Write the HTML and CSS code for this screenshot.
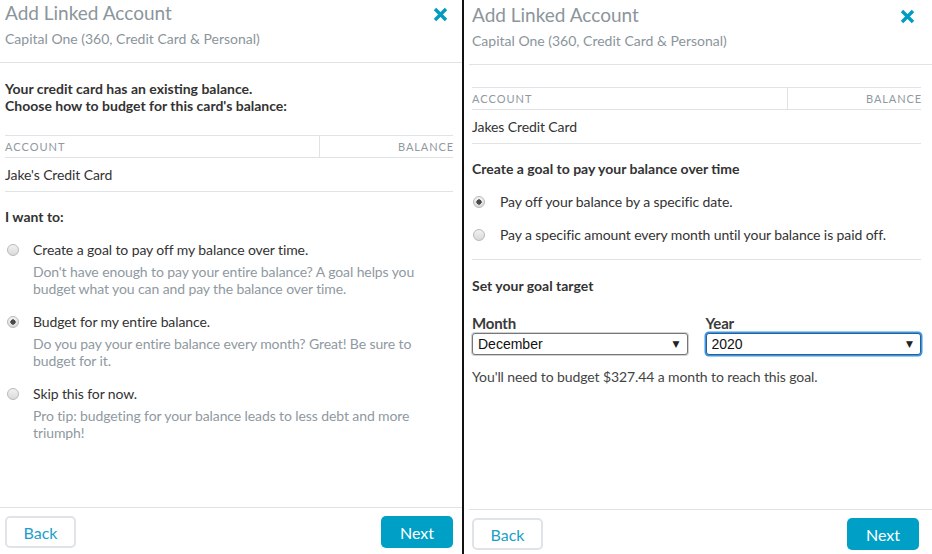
FILE: index.html
```html
<!DOCTYPE html>
<html lang="en">
<head>
<meta charset="utf-8">
<title>Add Linked Account</title>
<link rel="stylesheet" href="styles.css">
</head>
<body>
<div class="page">
  <section class="panel panel-left">
    <header class="header">
      <div class="titles">
        <h1 class="title">Add Linked Account</h1>
        <p class="subtitle">Capital One (360, Credit Card &amp; Personal)</p>
      </div>
      <button class="close" aria-label="Close">
        <svg width="15" height="15" viewBox="0 0 15 15"><path d="M2 2 L13 13 M13 2 L2 13" stroke="#009cc2" stroke-width="3.4" fill="none"/></svg>
      </button>
    </header>
    <div class="body">
      <p class="intro">Your credit card has an existing balance.<br>Choose how to budget for this card's balance:</p>
      <div class="table">
        <div class="thead"><span class="th-acc">Account</span><span class="th-bal">Balance</span></div>
        <div class="trow">Jake's Credit Card</div>
      </div>
      <p class="heading heading-want">I want to:</p>
      <label class="option option-first">
        <input type="radio" name="plan" class="radio">
        <span class="opt-text"><span class="opt-label">Create a goal to pay off my balance over time.</span>
        <span class="opt-desc">Don't have enough to pay your entire balance? A goal helps you budget what you can and pay the balance over time.</span></span>
      </label>
      <label class="option">
        <input type="radio" name="plan" class="radio" checked>
        <span class="opt-text"><span class="opt-label">Budget for my entire balance.</span>
        <span class="opt-desc">Do you pay your entire balance every month? Great! Be sure to budget for it.</span></span>
      </label>
      <label class="option">
        <input type="radio" name="plan" class="radio">
        <span class="opt-text"><span class="opt-label">Skip this for now.</span>
        <span class="opt-desc">Pro tip: budgeting for your balance leads to less debt and more triumph!</span></span>
      </label>
    </div>
    <footer class="footer">
      <button class="btn btn-back">Back</button>
      <button class="btn btn-next">Next</button>
    </footer>
  </section>
  <div class="divider"></div>
  <section class="panel panel-right">
    <header class="header header-right">
      <div class="titles">
        <h1 class="title">Add Linked Account</h1>
        <p class="subtitle">Capital One (360, Credit Card &amp; Personal)</p>
      </div>
      <button class="close" aria-label="Close">
        <svg width="15" height="15" viewBox="0 0 15 15"><path d="M2 2 L13 13 M13 2 L2 13" stroke="#009cc2" stroke-width="3.4" fill="none"/></svg>
      </button>
    </header>
    <div class="body body-right">
      <div class="table table-right">
        <div class="thead"><span class="th-acc">Account</span><span class="th-bal">Balance</span></div>
        <div class="trow">Jakes Credit Card</div>
      </div>
      <p class="heading heading-goal">Create a goal to pay your balance over time</p>
      <label class="option option-right option-first">
        <input type="radio" name="goal" class="radio" checked>
        <span class="opt-label">Pay off your balance by a specific date.</span>
      </label>
      <label class="option option-right">
        <input type="radio" name="goal" class="radio">
        <span class="opt-label">Pay a specific amount every month until your balance is paid off.</span>
      </label>
      <div class="rule"></div>
      <p class="heading heading-target">Set your goal target</p>
      <div class="fields">
        <div class="field">
          <label class="field-label" for="month">Month</label>
          <div class="select-wrap">
            <select id="month" class="select"><option>December</option></select>
            <span class="arrow">&#9660;</span>
          </div>
        </div>
        <div class="field">
          <label class="field-label" for="year">Year</label>
          <div class="select-wrap select-focus">
            <select id="year" class="select"><option>2020</option></select>
            <span class="arrow">&#9660;</span>
          </div>
        </div>
      </div>
      <p class="result">You'll need to budget $327.44 a month to reach this goal.</p>
    </div>
    <footer class="footer footer-right">
      <button class="btn btn-back">Back</button>
      <button class="btn btn-next">Next</button>
    </footer>
  </section>
</div>
</body>
</html>
```

FILE: styles.css
```css
* { box-sizing: border-box; }
html, body { margin: 0; padding: 0; background: #fff; }
body {
  font-family: Lato, "Noto Sans", sans-serif;
  font-size: 14px;
  line-height: 17px;
  color: #333;
}
p, h1 { margin: 0; }

.page {
  display: flex;
  width: 932px;
  height: 554px;
  overflow: hidden;
}

.panel {
  display: flex;
  flex-direction: column;
  height: 554px;
}
.panel-left { width: 462px; }
.divider { width: 2px; background: #111; height: 554px; }
.panel-right { flex: 1; padding-left: 5px; padding-top: 2px; }

/* header */
.header {
  display: flex;
  justify-content: space-between;
  align-items: flex-start;
  padding: 1px 14px 15px 5px;
  border-bottom: 1px solid #dfe3e6;
}
.header-right { padding: 1px 17px 15px 3px; }
.title {
  font-size: 19px;
  line-height: 24px;
  font-weight: 400;
  color: #8b959b;
}
.subtitle {
  margin-top: 5px;
  font-size: 14px;
  line-height: 17px;
  color: #8b959b;
}
.close {
  border: 0;
  background: none;
  padding: 0;
  margin-top: 6px;
  width: 15px;
  height: 15px;
  display: block;
}
.close svg { display: block; }

/* body */
.body { flex: 1; padding: 0 9px 0 5px; }
.body-right { padding: 0 11px 0 3px; }

.intro { margin-top: 17px; font-weight: 700; color: #333; }

.table { margin-top: 21px; }
.table-right { margin-top: 22px; }
.thead {
  display: flex;
  height: 23px;
  border-top: 1px solid #dfe3e6;
  border-bottom: 1px solid #dfe3e6;
  font-size: 11px;
  line-height: 21px;
  letter-spacing: 1px;
  text-transform: uppercase;
  color: #8f999f;
}
.th-acc { flex: 1; }
.th-bal {
  width: 135px;
  border-left: 1px solid #dfe3e6;
  text-align: right;
  letter-spacing: 0.9px;
  margin-right: -1px;
}
.trow {
  height: 34px;
  line-height: 33px;
  border-bottom: 1px solid #dfe3e6;
  color: #333;
  letter-spacing: -0.1px;
}

.heading { font-weight: 700; color: #333; }
.heading-want { margin-top: 16px; }
.heading-goal { margin-top: 16px; }
.heading-target { margin-top: 17px; }

.option {
  display: flex;
  align-items: flex-start;
  margin-top: 16px;
  cursor: pointer;
}
.option-first { margin-top: 16px; }
.opt-text { display: flex; flex-direction: column; }
.opt-label { color: #333; letter-spacing: -0.1px; }
.opt-desc { margin-top: 5px; color: #8f999f; letter-spacing: -0.1px; }

.radio {
  appearance: none;
  -webkit-appearance: none;
  width: 12px;
  height: 12px;
  margin: 3px 14px 0 2px;
  border: 1px solid #b9b9b9;
  border-radius: 50%;
  background: linear-gradient(#f2f2f2, #d9d9d9);
  flex: none;
  position: relative;
}
.radio:checked {
  background: radial-gradient(circle, #4a4a4a 0 2.4px, transparent 2.9px), linear-gradient(#f2f2f2, #d9d9d9);
}
.option-right .radio { margin: 3px 15px 0 1px; }

.rule {
  margin-top: 16px;
  height: 1px;
  background: #dfe3e6;
}

.fields {
  display: flex;
  gap: 18px;
  margin-top: 20px;
}
.field { flex: 1; display: flex; flex-direction: column; }
.field-label {
  font-size: 15px;
  line-height: 18px;
  font-weight: 700;
  color: #3a3a3a;
  letter-spacing: -0.2px;
}
.select-wrap {
  position: relative;
  margin-top: 1px;
  height: 22px;
  border: 1px solid #767676;
  border-radius: 3px;
  background: #fff;
  box-shadow: 0 0 0 1px #cfd3d6;
}
.select-focus {
  border: 1px solid #2c5f8f;
  box-shadow: 0 0 0 1.5px #3b97e6;
}
.select {
  appearance: none;
  -webkit-appearance: none;
  width: 100%;
  height: 20px;
  border: 0;
  background: transparent;
  padding: 0 0 0 5px;
  font-family: "Liberation Sans", Arial, sans-serif;
  font-size: 14px;
  color: #111;
  outline: none;
}
.arrow {
  position: absolute;
  right: 7px;
  top: 4px;
  font-size: 9px;
  line-height: 12px;
  color: #222;
  pointer-events: none;
  font-family: "DejaVu Sans", sans-serif;
}

.result { margin-top: 13px; color: #444; letter-spacing: -0.1px; }

/* footer */
.footer {
  display: flex;
  justify-content: space-between;
  padding: 8px 9px 6px 5px;
  border-top: 1px solid #dfe3e6;
}
.footer-right { padding: 8px 13px 4px 3px; }
.btn {
  height: 32px;
  width: 71px;
  border-radius: 5px;
  font-family: Lato, "Noto Sans", sans-serif;
  font-size: 16px;
  cursor: pointer;
}
.btn-back {
  background: #fff;
  border: 2px solid #dfe4e8;
  color: #1a9fc9;
}
.btn-next {
  width: 72px;
  background: #00a0c6;
  border: 0;
  color: #fff;
}
```
